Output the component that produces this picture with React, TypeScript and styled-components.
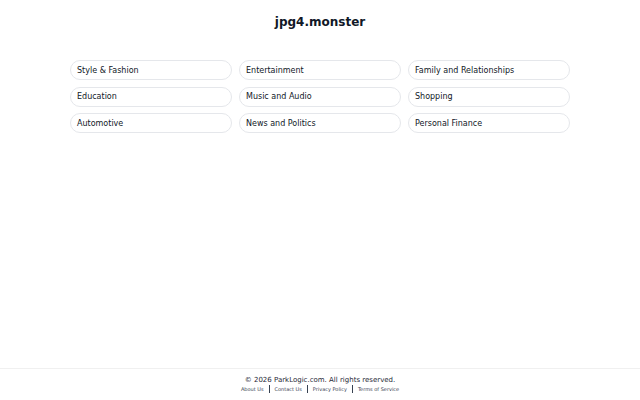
import React from 'react';
import styled, { createGlobalStyle } from 'styled-components';

const GlobalStyle = createGlobalStyle`
  html, body {
    margin: 0;
    padding: 0;
    background: #ffffff;
    font-family: 'DejaVu Sans', sans-serif;
    color: #111827;
  }
`;

const Page = styled.div`
  min-height: 100vh;
  display: flex;
  flex-direction: column;
`;

const Main = styled.main`
  flex: 1;
  display: flex;
  flex-direction: column;
  align-items: center;
  padding-top: 15px;
`;

const Title = styled.h1`
  margin: 0;
  font-size: 12px;
  font-weight: 700;
  line-height: 15px;
  color: #111827;
`;

const Grid = styled.div`
  margin-top: 30px;
  width: 500px;
  display: grid;
  grid-template-columns: repeat(3, 1fr);
  column-gap: 7px;
  row-gap: 6.5px;
`;

const Pill = styled.a`
  display: flex;
  align-items: center;
  box-sizing: border-box;
  height: 20px;
  padding: 0 6px;
  border: 1px solid #e5e7eb;
  border-radius: 999px;
  font-size: 8px;
  color: #111827;
  text-decoration: none;
`;

const Footer = styled.footer`
  border-top: 1px solid #f0f0f0;
  height: 32px;
  display: flex;
  flex-direction: column;
  align-items: center;
  padding-top: 7px;
  box-sizing: border-box;
`;

const Copy = styled.p`
  margin: 0;
  font-size: 7px;
  line-height: 9px;
  color: #1f2937;
`;

const Links = styled.div`
  display: flex;
  align-items: center;
  font-size: 5px;
  line-height: 8px;
`;

const FooterLink = styled.a`
  color: #374151;
  text-decoration: none;
`;

const Sep = styled.span`
  width: 1px;
  height: 8px;
  background: #374151;
  margin: 0 5px;
`;

const categories = [
  'Style & Fashion',
  'Entertainment',
  'Family and Relationships',
  'Education',
  'Music and Audio',
  'Shopping',
  'Automotive',
  'News and Politics',
  'Personal Finance',
];

const links = ['About Us', 'Contact Us', 'Privacy Policy', 'Terms of Service'];

export default function App() {
  return (
    <Page>
      <GlobalStyle />
      <Main>
        <Title>jpg4.monster</Title>
        <Grid>
          {categories.map((c) => (
            <Pill key={c} href="#">
              {c}
            </Pill>
          ))}
        </Grid>
      </Main>
      <Footer>
        <Copy>© 2026 ParkLogic.com. All rights reserved.</Copy>
        <Links>
          {links.map((l, i) => (
            <React.Fragment key={l}>
              {i > 0 && <Sep />}
              <FooterLink href="#">{l}</FooterLink>
            </React.Fragment>
          ))}
        </Links>
      </Footer>
    </Page>
  );
}
